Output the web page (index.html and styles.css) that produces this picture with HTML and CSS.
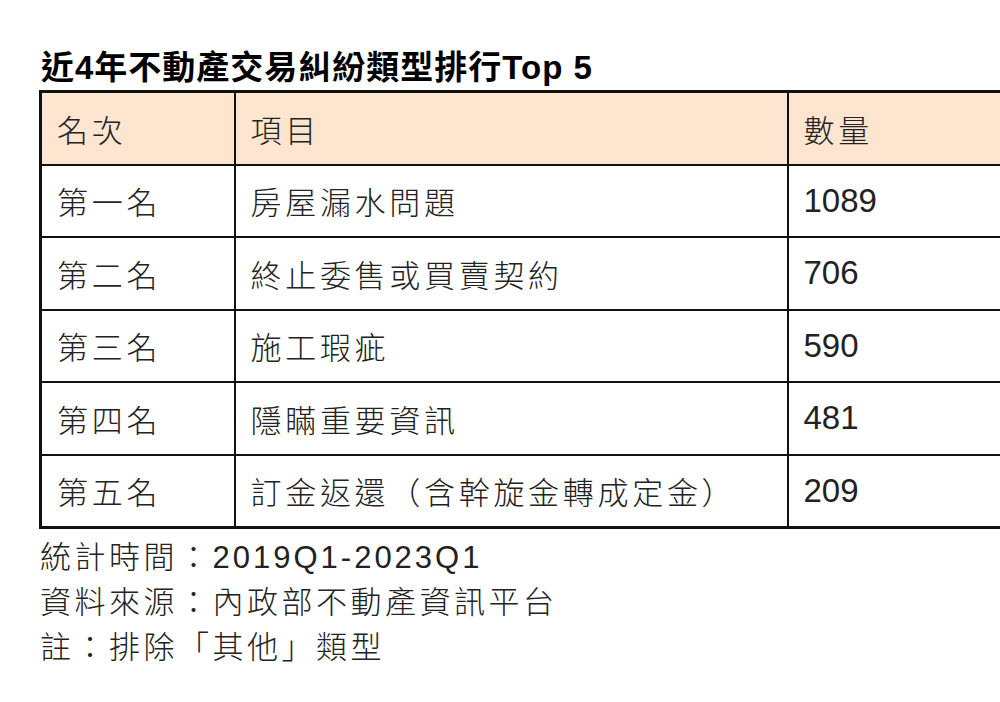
FILE: index.html
```html
<!DOCTYPE html>
<html lang="zh-Hant">
<head>
<meta charset="utf-8">
<link rel="stylesheet" href="styles.css">
</head>
<body>
<main class="page">
  <h1 class="title">近4年不動產交易糾紛類型排行Top 5</h1>
  <table class="rank">
    <colgroup><col class="c1"><col class="c2"><col class="c3"></colgroup>
    <thead>
      <tr><th>名次</th><th>項目</th><th>數量</th></tr>
    </thead>
    <tbody>
      <tr><td>第一名</td><td>房屋漏水問題</td><td class="num">1089</td></tr>
      <tr><td>第二名</td><td>終止委售或買賣契約</td><td class="num">706</td></tr>
      <tr><td>第三名</td><td>施工瑕疵</td><td class="num">590</td></tr>
      <tr><td>第四名</td><td>隱瞞重要資訊</td><td class="num">481</td></tr>
      <tr><td>第五名</td><td>訂金返還（含幹旋金轉成定金）</td><td class="num">209</td></tr>
    </tbody>
  </table>
  <div class="notes">
    <p>統計時間：<span class="latin">2019Q1-2023Q1</span></p>
    <p>資料來源：內政部不動產資訊平台</p>
    <p>註：排除「其他」類型</p>
  </div>
</main>
</body>
</html>
```

FILE: styles.css
```css
html, body {
  margin: 0;
  padding: 0;
  background: #ffffff;
  overflow: hidden;
}
body {
  width: 1000px;
  height: 702px;
  font-family: "Liberation Sans", "Noto Sans CJK TC", sans-serif;
  color: #1a1a1a;
}
.page {
  padding: 47px 0 0 39px;
}
.title {
  margin: 0 0 0 2px;
  font-size: 33px;
  line-height: 42px;
  font-weight: bold;
  color: #000;
  letter-spacing: 1px;
  height: 43px;
}
.rank {
  border-collapse: collapse;
  width: 1000px;
  table-layout: fixed;
  border: 3px solid #111;
  border-right: none;
}
.c1 { width: 194px; }
.c2 { width: 553px; }
.c3 { width: 253px; }
.rank th, .rank td {
  border: 2px solid #111;
  height: 70.5px;
  padding: 0 0 0 15px;
  text-align: left;
  font-weight: 300;
  font-size: 31px;
  letter-spacing: 3.7px;
  color: #222;
  vertical-align: middle;
}
.rank th {
  background: #fde5d0;
}
.rank td.num {
  font-size: 33px;
  font-weight: normal;
  letter-spacing: 0;
}
.notes {
  margin-top: 6px;
  padding-left: 1px;
}
.notes p {
  margin: 0;
  font-size: 31px;
  font-weight: 300;
  line-height: 45px;
  letter-spacing: 3.5px;
  color: #222;
}
.notes .latin {
  font-size: 31px;
  font-weight: normal;
  letter-spacing: 3px;
}
```
